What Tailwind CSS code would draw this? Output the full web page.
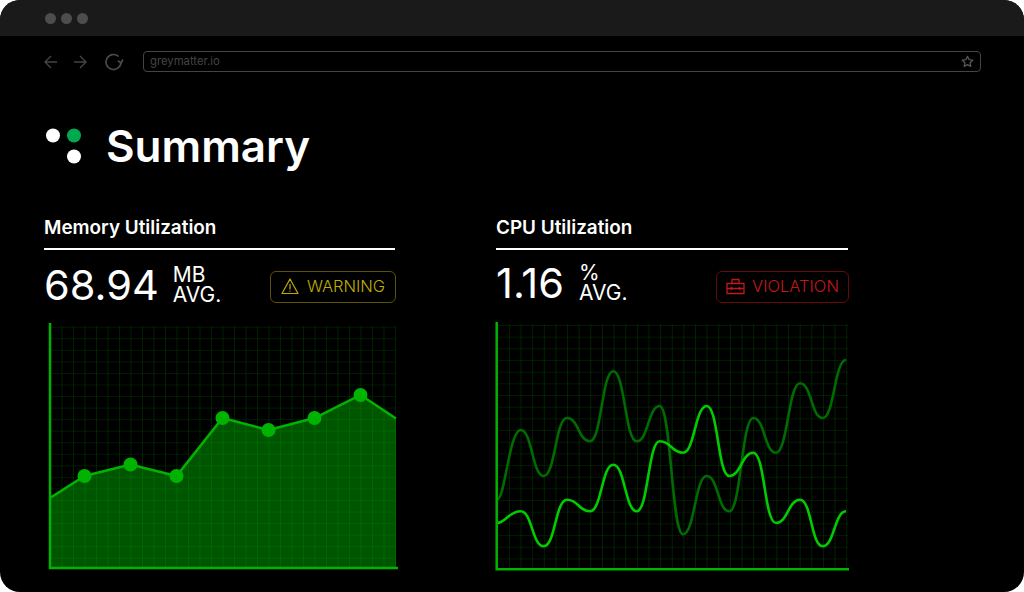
<!DOCTYPE html>
<html lang="en">
<head>
    <meta charset="UTF-8">
    <meta name="viewport" content="width=device-width, initial-scale=1.0">
    <title>Summary</title>
    <script src="https://cdn.jsdelivr.net/npm/@tailwindcss/browser@4"></script>
</head>
<body class="bg-white font-['Inter',sans-serif] overflow-hidden">
    <div class="w-[1024px] h-[592px] bg-black rounded-[20px] overflow-hidden text-white">
        <!-- window title bar -->
        <div class="h-9 bg-[#1a1a1a] flex items-center gap-[5px] pl-[45px]">
            <span class="w-[11px] h-[11px] rounded-full bg-[#4d4d4d]"></span>
            <span class="w-[11px] h-[11px] rounded-full bg-[#4d4d4d]"></span>
            <span class="w-[11px] h-[11px] rounded-full bg-[#4d4d4d]"></span>
        </div>

        <!-- browser toolbar -->
        <div class="flex items-center mt-[15px] pl-[44px] pr-[43px] h-[21px]">
            <svg class="w-[14px] h-[14px] mr-[15px]" viewBox="0 0 14 14" fill="none" stroke="#444" stroke-width="1.4"><path d="M13 7H1M7 1L1 7l6 6"/></svg>
            <svg class="w-[14px] h-[14px] mr-[17px]" viewBox="0 0 14 14" fill="none" stroke="#444" stroke-width="1.4"><path d="M1 7h12M7 1l6 6-6 6"/></svg>
            <svg class="w-[20px] h-[20px] mr-[19px]" viewBox="0 0 20 20" fill="none" stroke="#4a4a4a" stroke-width="1.7"><path d="M17 10a7.5 7.5 0 1 1-2.4-5.5M19 7.5l-1.9 3.4-3.2-2.2"/></svg>
            <div class="flex-1 h-[21px] border-[1.5px] border-[#444] rounded-[4px] flex items-center justify-between pl-[6px] pr-[6px]">
                <span class="text-[11.3px] text-[#444]">greymatter.io</span>
                <svg class="w-[13px] h-[13px]" viewBox="0 0 24 24" fill="none" stroke="#555" stroke-width="2.4" stroke-linejoin="round"><path d="M12 2.5l3 6.2 6.8.9-5 4.7 1.3 6.8-6.1-3.3-6.1 3.3 1.3-6.8-5-4.7 6.8-.9z"/></svg>
            </div>
        </div>

        <!-- page heading -->
        <div class="flex items-center mt-[44px] pl-[46px] h-[60px]">
            <svg class="w-[36px] h-[36px] mr-[24px]" viewBox="0 0 36 36"><circle cx="7" cy="7.5" r="7" fill="#fff"/><circle cx="28" cy="7.5" r="7" fill="#00a84f"/><circle cx="28" cy="28.5" r="7" fill="#fff"/></svg>
            <h1 class="text-[44px] leading-none font-semibold">Summary</h1>
        </div>

        <div class="flex gap-[101px] pl-[44px] mt-[41px]">
            <!-- memory column -->
            <section class="w-[351px] shrink-0">
                <h2 class="text-[18.9px] leading-[22px] font-semibold">Memory Utilization</h2>
                <div class="h-[1.5px] bg-white mt-[9px]"></div>
                <div class="flex items-center h-[37px] mt-[18.5px]">
                    <span class="text-[41.5px] leading-none mb-[2px]">68.94</span>
                    <span class="text-[21px] leading-[20px] ml-[14px] mb-[3px]">MB<br>AVG.</span>
                    <div class="flex items-center justify-center gap-[8px] ml-auto -mr-[1px] w-[126px] h-[32px] border border-[#5c5200] rounded-[6px] text-[#bfae00] text-[16.5px] font-light">
                        <svg class="w-[18px] h-[17px]" viewBox="0 0 18 17" fill="none" stroke="#bfae00" stroke-width="1.2" stroke-linejoin="round"><path d="M9 1L1 15.5h16zM9 6v5.5M9 12.8v1"/></svg>
                        <span>WARNING</span>
                    </div>
                </div>
                <svg class="block w-[352px] h-[252px] mt-[15px] ml-[4px]" viewBox="48 320 352 252" fill="none">
                    <defs>
                        <pattern id="memGrid" patternUnits="userSpaceOnUse" x="50" y="315.2" width="11.5" height="11.55">
                            <path d="M0 0V11.55M0 0H11.5" stroke="#00b300" stroke-opacity=".3" stroke-width="1.2"/>
                        </pattern>
                    </defs>
                    <path d="M50 498L84.5 476L130.5 464.5L176.5 476L222.5 418L268.5 430L314.5 418L360.5 395L396 418.5V568H50Z" fill="#005600"/>
                    <rect x="50" y="326" width="346" height="242" fill="url(#memGrid)"/>
                    <path d="M50 498L84.5 476L130.5 464.5L176.5 476L222.5 418L268.5 430L314.5 418L360.5 395L396 418.5" stroke="#00b300" stroke-width="2.5"/>
                    <g fill="#00b300">
                        <circle cx="84.5" cy="476" r="7"/>
                        <circle cx="130.5" cy="464.5" r="7"/>
                        <circle cx="176.5" cy="476" r="7"/>
                        <circle cx="222.5" cy="418" r="7"/>
                        <circle cx="268.5" cy="430" r="7"/>
                        <circle cx="314.5" cy="418" r="7"/>
                        <circle cx="360.5" cy="395" r="7"/>
                    </g>
                    <path d="M50 323V568H398" stroke="#00b300" stroke-width="2.5"/>
                </svg>
            </section>

            <!-- cpu column -->
            <section class="w-[352px] shrink-0">
                <h2 class="text-[18.9px] leading-[22px] font-semibold">CPU Utilization</h2>
                <div class="h-[1.5px] bg-white mt-[9px]"></div>
                <div class="flex items-center h-[37px] mt-[18.5px]">
                    <span class="text-[41.5px] leading-none mb-[6px]">1.16</span>
                    <span class="text-[21px] leading-[20px] ml-[15px] mb-[7px]">%<br>AVG.</span>
                    <div class="flex items-center justify-center gap-[7px] ml-auto -mr-[1px] w-[133px] h-[32px] border border-[#660a0a] rounded-[6px] text-[#c41818] text-[16.5px] font-light">
                        <svg class="w-[19px] h-[17px]" viewBox="0 0 19 17" fill="none" stroke="#c41818" stroke-width="1.3" stroke-linejoin="round"><path d="M1 5.5h17v10H1zM1 10.5h17M5.5 9v3M13.5 9v3M6 5.5V1.5h7v4"/></svg>
                        <span>VIOLATION</span>
                    </div>
                </div>
                <svg class="block w-[358px] h-[252px] mt-[15px] -ml-[2px]" viewBox="494 320 358 252" fill="none">
                    <defs>
                        <pattern id="cpuGrid" patternUnits="userSpaceOnUse" x="497.3" y="325" width="11.63" height="11.67">
                            <path d="M0 0V11.67M0 0H11.63" stroke="#00b300" stroke-opacity=".3" stroke-width="1.2"/>
                        </pattern>
                    </defs>
                    <rect x="497" y="324" width="351" height="245" fill="url(#cpuGrid)"/>
                    <path d="M497.3 499.3C505 499.3 509.2 430 520.7 430S532.2 476 543.7 476S555.5 418 567 418S578.5 441.3 590 441.3S601.8 371.3 613.3 371.3S625.2 441.3 636.7 441.3S648.2 406 659.7 406S671.5 534.3 683 534.3S695.2 476 706.7 476S717.8 511.3 729.3 511.3S741.8 418 753.3 418S764.5 452.7 776 452.7S788.5 383.3 800 383.3S811.2 418 822.7 418S834.5 360 846 360" stroke="#006b00" stroke-width="2.6"/>
                    <path d="M497.3 523C505 523 509.2 511.3 520.7 511.3S532.2 546.3 543.7 546.3S555.5 499.7 567 499.7S578.5 511.3 590 511.3S601.8 464.7 613.3 464.7S625.2 511.3 636.7 511.3S648.2 441.3 659.7 441.3S671.5 452.7 683 452.7S695.2 406 706.7 406S717.8 476 729.3 476S741.8 452.7 753.3 452.7S764.5 523 776 523S788.5 499.7 800 499.7S811.2 546.3 822.7 546.3S834.5 511.3 846 511.3" stroke="#00cc00" stroke-width="2.6"/>
                    <path d="M496.7 322V569.3H849" stroke="#00b300" stroke-width="2.5"/>
                </svg>
            </section>
        </div>
    </div>
</body>
</html>
